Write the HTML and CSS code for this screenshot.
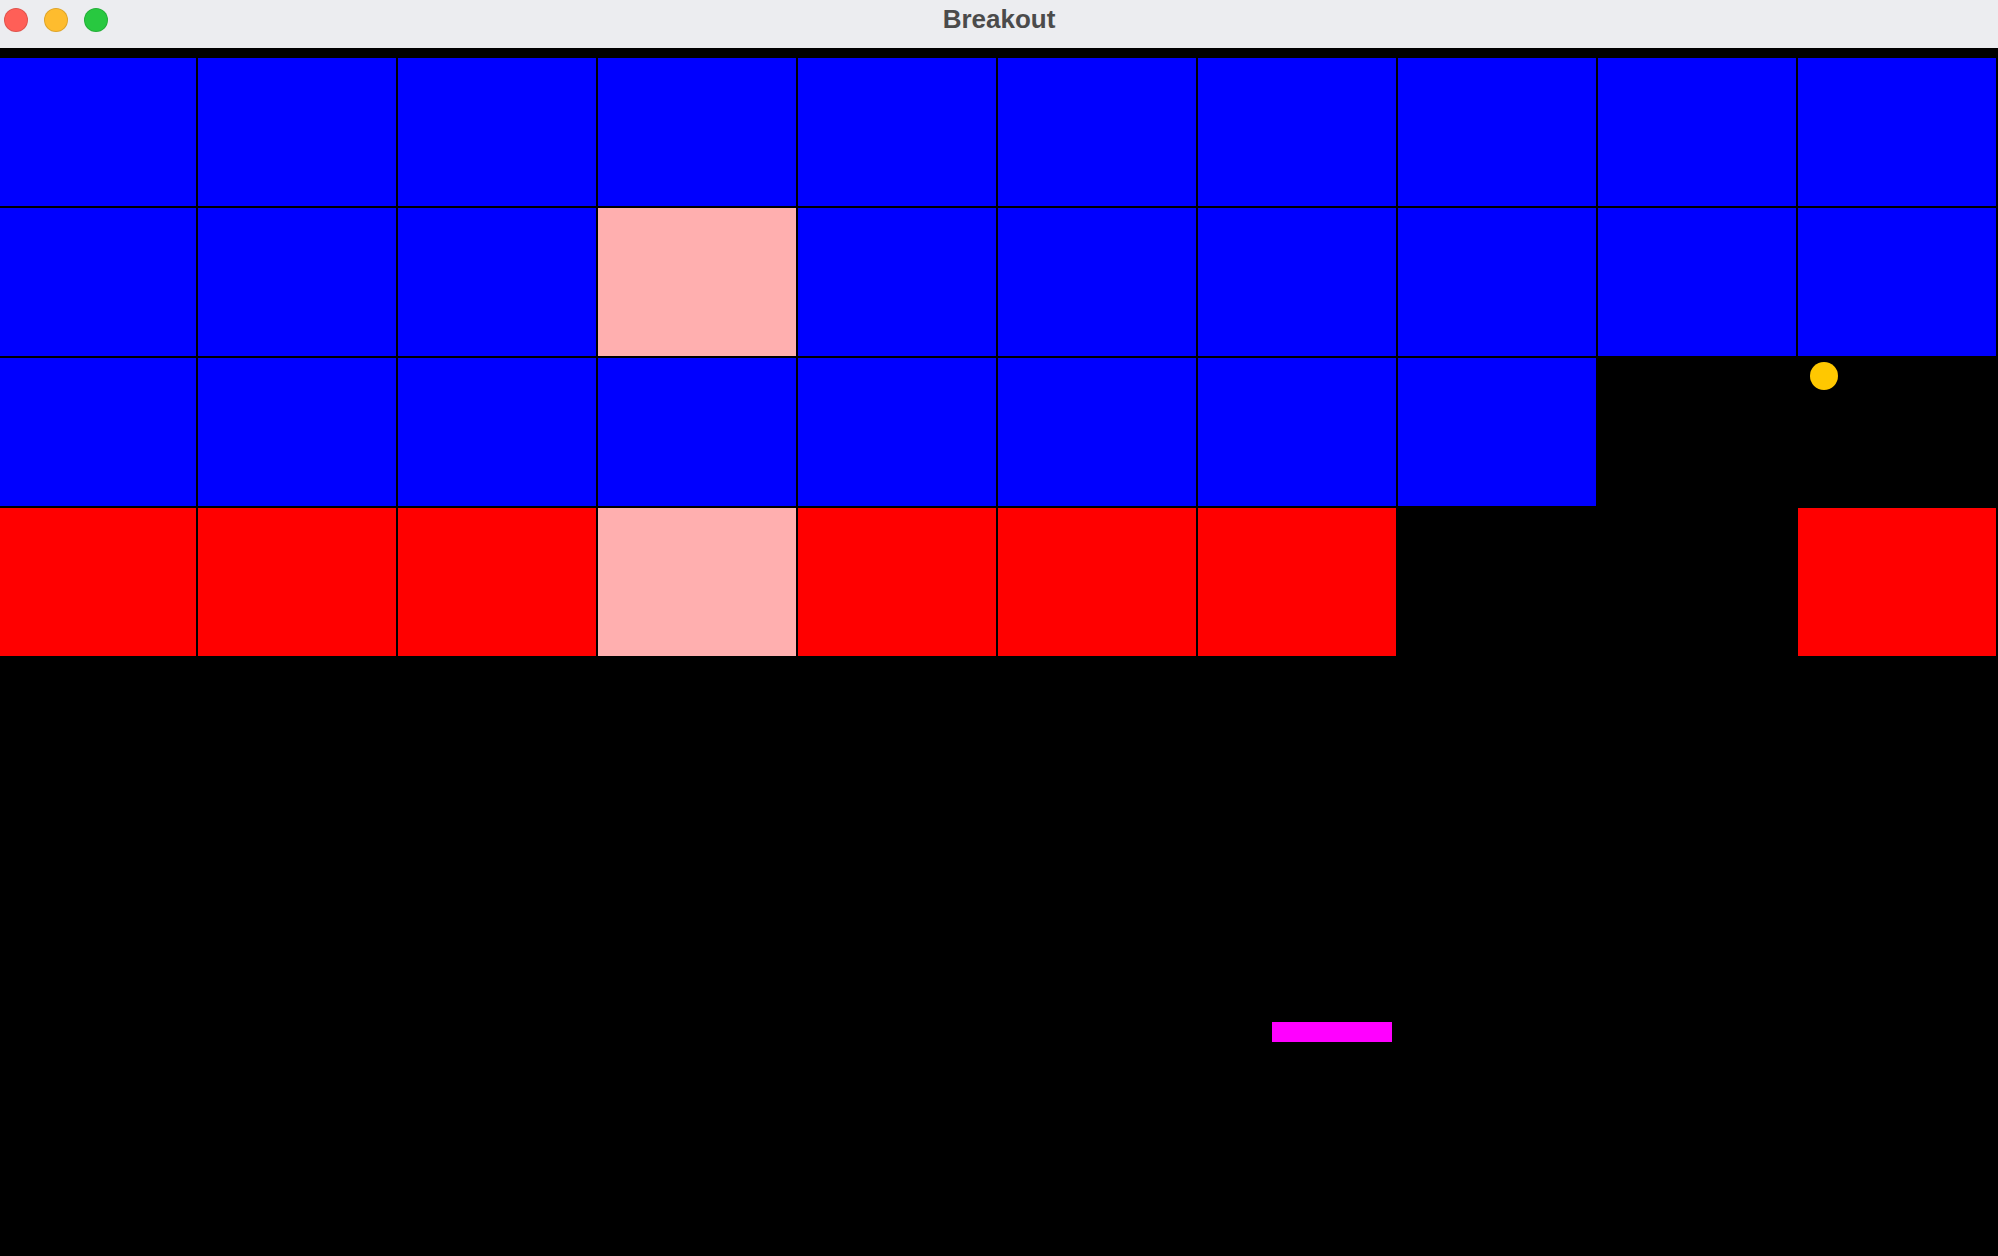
FILE: index.html
```html
<!DOCTYPE html>
<html lang="en">
  <head>
    <meta charset="UTF-8" />
    <title>Breakout</title>
    <link rel="stylesheet" href="styles.css">
  </head>
  <body>
    <div class="titlebar">
      <div class="lights">
        <span class="light close"></span>
        <span class="light minimize"></span>
        <span class="light zoom"></span>
      </div>
      <div class="title">Breakout</div>
      <div></div>
    </div>

    <div class="board">
      <div class="bricks">
        <!-- row 1 -->
        <div class="brick blue"></div><div class="brick blue"></div><div class="brick blue"></div><div class="brick blue"></div><div class="brick blue"></div>
        <div class="brick blue"></div><div class="brick blue"></div><div class="brick blue"></div><div class="brick blue"></div><div class="brick blue"></div>
        <!-- row 2 -->
        <div class="brick blue"></div><div class="brick blue"></div><div class="brick blue"></div><div class="brick pink"></div><div class="brick blue"></div>
        <div class="brick blue"></div><div class="brick blue"></div><div class="brick blue"></div><div class="brick blue"></div><div class="brick blue"></div>
        <!-- row 3 -->
        <div class="brick blue"></div><div class="brick blue"></div><div class="brick blue"></div><div class="brick blue"></div><div class="brick blue"></div>
        <div class="brick blue"></div><div class="brick blue"></div><div class="brick blue"></div><div class="brick"></div><div class="brick"></div>
        <!-- row 4 -->
        <div class="brick red"></div><div class="brick red"></div><div class="brick red"></div><div class="brick pink"></div><div class="brick red"></div>
        <div class="brick red"></div><div class="brick red"></div><div class="brick"></div><div class="brick"></div><div class="brick red"></div>
      </div>
      <div class="ball"></div>
      <div class="paddle"></div>
    </div>
  </body>
</html>
```

FILE: styles.css
```css
body {
  margin: 0;
  background: #000;
  font-family: "Liberation Sans", Arial, sans-serif;
  overflow: hidden;
}
.titlebar {
  height: 48px;
  background: #ecedf0;
  display: grid;
  grid-template-columns: 1fr auto 1fr;
}
.lights {
  display: flex;
  gap: 16px;
  padding-left: 4px;
  align-items: center;
  height: 40px;
}
.light {
  width: 22px;
  height: 22px;
  border-radius: 50%;
  border: 1px solid rgba(0, 0, 0, 0.12);
}
.close {
  background: #ff5f57;
}
.minimize {
  background: #febc2e;
}
.zoom {
  background: #28c840;
}
.title {
  font-size: 26px;
  font-weight: bold;
  color: #4b4b4b;
  line-height: 38px;
}
.board {
  position: relative;
  height: 1208px;
  padding-top: 10px;
  box-sizing: border-box;
}
.bricks {
  display: grid;
  grid-template-columns: 196px repeat(9, 198px);
  grid-auto-rows: 148px;
  gap: 2px;
}
.blue {
  background: #0000ff;
}
.red {
  background: #ff0000;
}
.pink {
  background: #ffafaf;
}
.ball {
  position: absolute;
  left: 1810px;
  top: 314px;
  width: 28px;
  height: 28px;
  border-radius: 50%;
  background: #ffc800;
}
.paddle {
  position: absolute;
  left: 1272px;
  top: 974px;
  width: 120px;
  height: 20px;
  background: #ff00ff;
}
```
